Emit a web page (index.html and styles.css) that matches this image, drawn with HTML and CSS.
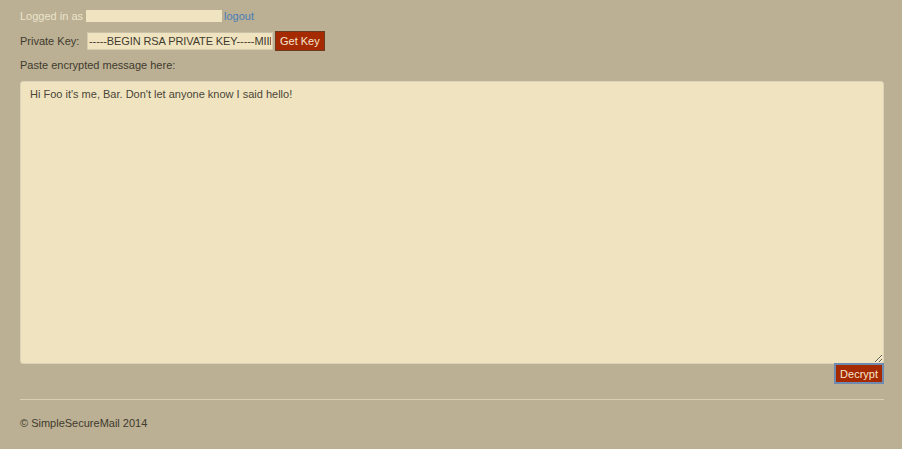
FILE: index.html
```html
<!DOCTYPE html>
<html>
<head>
<meta charset="utf-8">
<link rel="stylesheet" href="styles.css">
</head>
<body>
<div class="page">
  <div class="row login">
    <span class="muted">Logged in as</span>
    <span class="user-box"></span>
    <a class="logout" href="#">logout</a>
  </div>
  <div class="row key">
    <label class="label">Private Key:</label>
    <input class="key-input" type="text" value="-----BEGIN RSA PRIVATE KEY-----MIIEowIBAAKCAQEA">
    <button class="btn">Get Key</button>
  </div>
  <div class="row paste">Paste encrypted message here:</div>
  <textarea class="message">Hi Foo it's me, Bar. Don't let anyone know I said hello!</textarea>
  <div class="actions"><button class="btn btn-focus">Decrypt</button></div>
  <hr class="rule">
  <footer class="footer">© SimpleSecureMail 2014</footer>
</div>
</body>
</html>
```
FILE: styles.css
```css
html, body { margin: 0; padding: 0; }
body {
  background: #bbb093;
  font-family: "Liberation Sans", Arial, sans-serif;
  font-size: 11px;
  color: #3f3a2e;
}
.page { padding: 9px 18px 0 20px; display: flex; flex-direction: column; }
.row { display: flex; align-items: center; }
.login { height: 14px; }
.muted { color: #ebe3cc; }
.user-box {
  display: inline-block;
  width: 136px; height: 12px;
  background: #f0e4c0;
  margin-left: 3px;
  margin-right: 2px;
}
.logout { color: #4a7db8; text-decoration: none; }
.key { margin-top: 8px; height: 20px; }
.label { width: 67px; }
.key-input {
  box-sizing: border-box;
  width: 186px; height: 18px;
  border: 1px solid #d8ccb0;
  border-top-color: #c9c0a8;
  background: #f0e4c0;
  font-family: "Liberation Sans", Arial, sans-serif;
  font-size: 11px;
  color: #3f3a2e;
  padding: 0 1px;
  margin: 0 2px 0 0;
  letter-spacing: -0.1px;
}
.btn {
  background: #a52a00;
  color: #f6e6d0;
  border: 1px solid #6b3a20;
  font-family: "Liberation Sans", Arial, sans-serif;
  font-size: 11px;
  height: 20px;
  padding: 0 4px;
  margin: 0;
}
.btn-focus { border: 2px solid #6f8ab0; padding: 0 4px; height: 21px; }
.paste { margin-top: 4px; height: 20px; }
.message {
  box-sizing: border-box;
  margin-top: 6px;
  width: 864px; height: 283px;
  background: #f0e4c0;
  border: 1px solid #ddd3b8;
  border-radius: 3px;
  font-family: "Liberation Sans", Arial, sans-serif;
  font-size: 11px;
  color: #4a4538;
  padding: 6px 9px;
  resize: vertical;
}
.actions { display: flex; justify-content: flex-end; width: 864px; margin-top: -1px; }
.rule {
  width: 864px;
  margin: 15px 0 0 0;
  border: 0;
  border-top: 1px solid #d8cfb5;
  height: 0;
}
.footer { margin-top: 17px; color: #3f3a2e; }
```
